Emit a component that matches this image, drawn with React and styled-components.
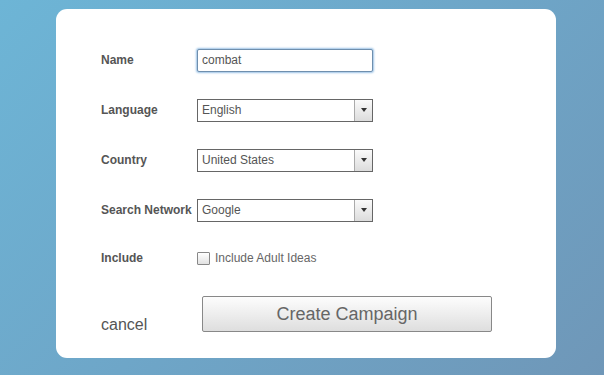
import React, { useState } from "react";
import styled, { createGlobalStyle } from "styled-components";

const GlobalStyle = createGlobalStyle`
  html, body {
    margin: 0;
    padding: 0;
    height: 100%;
  }
  body {
    font-family: "Liberation Sans", Arial, sans-serif;
    background: linear-gradient(135deg, #6db5d6 0%, #6ea6c8 50%, #6f97b8 100%);
  }
`;

const Page = styled.div`
  width: 604px;
  height: 375px;
  padding: 9px 0 0 56px;
  box-sizing: border-box;
`;

const Card = styled.form`
  width: 500px;
  height: 349px;
  background: #fff;
  border-radius: 11px;
  box-sizing: border-box;
  padding: 26px 0 0 45px;
`;

const Row = styled.div`
  display: grid;
  grid-template-columns: 96px 176px;
  align-items: center;
  height: ${(p) => p.$h || 50}px;
`;

const Label = styled.label`
  font-size: 12px;
  font-weight: bold;
  color: #555;
  white-space: nowrap;
`;

const TextInput = styled.input`
  width: 176px;
  height: 23px;
  box-sizing: border-box;
  border: 1px solid #6f8fae;
  border-radius: 2px;
  box-shadow: 0 0 2px 1px #9cc3e6;
  padding: 0 4px;
  font-family: "Liberation Sans", Arial, sans-serif;
  font-size: 12px;
  color: #555;
  outline: none;
`;

const SelectBox = styled.div`
  display: flex;
  width: 176px;
  height: 23px;
  box-sizing: border-box;
  border: 1px solid #666;
  background: #fff;
`;

const SelectValue = styled.div`
  flex: 1;
  display: flex;
  align-items: center;
  padding-left: 4px;
  font-size: 12px;
  color: #555;
`;

const Arrow = styled.div`
  width: 17px;
  border-left: 1px solid #aaa;
  background: linear-gradient(#fafafa, #dcdcdc);
  display: flex;
  align-items: center;
  justify-content: center;
  &::after {
    content: "";
    border-left: 3.5px solid transparent;
    border-right: 3.5px solid transparent;
    border-top: 4px solid #333;
  }
`;

const CheckLabel = styled.label`
  display: flex;
  align-items: center;
  gap: 5px;
  font-size: 12px;
  color: #666;
  white-space: nowrap;
`;

const Box = styled.span`
  width: 13px;
  height: 13px;
  box-sizing: border-box;
  border: 1px solid #888;
  border-radius: 1px;
  background: linear-gradient(#fff, #e2e2e2);
`;

const Footer = styled.div`
  display: flex;
  align-items: flex-start;
  margin-top: 15px;
`;

const Cancel = styled.a`
  width: 101px;
  padding-top: 20px;
  font-size: 16px;
  color: #555;
  cursor: pointer;
`;

const CreateButton = styled.button`
  width: 290px;
  height: 36px;
  border: 1px solid #888;
  border-radius: 2px;
  background: linear-gradient(#fdfdfd, #dedede);
  font-family: "Liberation Sans", Arial, sans-serif;
  font-size: 18px;
  color: #666;
  cursor: pointer;
`;

const Select = ({ value }) => (
  <SelectBox>
    <SelectValue>{value}</SelectValue>
    <Arrow />
  </SelectBox>
);

export default function App() {
  const [name, setName] = useState("combat");
  return (
    <>
      <GlobalStyle />
      <Page>
        <Card onSubmit={(e) => e.preventDefault()}>
          <Row>
            <Label>Name</Label>
            <TextInput value={name} onChange={(e) => setName(e.target.value)} />
          </Row>
          <Row>
            <Label>Language</Label>
            <Select value="English" />
          </Row>
          <Row>
            <Label>Country</Label>
            <Select value="United States" />
          </Row>
          <Row>
            <Label>Search Network</Label>
            <Select value="Google" />
          </Row>
          <Row $h={46}>
            <Label>Include</Label>
            <CheckLabel>
              <Box />
              Include Adult Ideas
            </CheckLabel>
          </Row>
          <Footer>
            <Cancel>cancel</Cancel>
            <CreateButton type="submit">Create Campaign</CreateButton>
          </Footer>
        </Card>
      </Page>
    </>
  );
}
